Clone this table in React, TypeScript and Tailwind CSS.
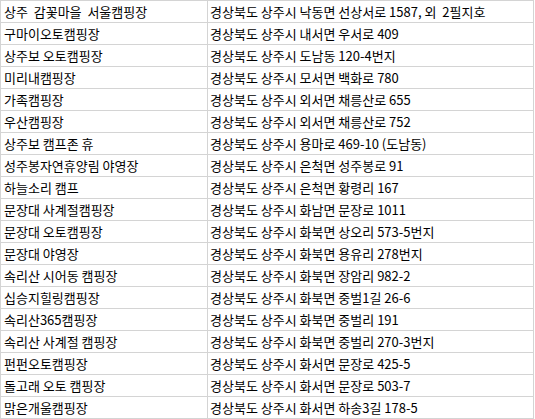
const rows: [string, string][] = [
  ["상주  감꽃마을  서울캠핑장", "경상북도 상주시 낙동면 선상서로 1587, 외  2필지호"],
  ["구마이오토캠핑장", "경상북도 상주시 내서면 우서로 409"],
  ["상주보 오토캠핑장", "경상북도 상주시 도남동 120-4번지"],
  ["미리내캠핑장", "경상북도 상주시 모서면 백화로 780"],
  ["가족캠핑장", "경상북도 상주시 외서면 채릉산로 655"],
  ["우산캠핑장", "경상북도 상주시 외서면 채릉산로 752"],
  ["상주보 캠프존 휴", "경상북도 상주시 용마로 469-10 (도남동)"],
  ["성주봉자연휴양림 야영장", "경상북도 상주시 은척면 성주봉로 91"],
  ["하늘소리 캠프", "경상북도 상주시 은척면 황령리 167"],
  ["문장대 사계절캠핑장", "경상북도 상주시 화남면 문장로 1011"],
  ["문장대 오토캠핑장", "경상북도 상주시 화북면 상오리 573-5번지"],
  ["문장대 야영장", "경상북도 상주시 화북면 용유리 278번지"],
  ["속리산 시어동 캠핑장", "경상북도 상주시 화북면 장암리 982-2"],
  ["십승지힐링캠핑장", "경상북도 상주시 화북면 중벌1길 26-6"],
  ["속리산365캠핑장", "경상북도 상주시 화북면 중벌리 191"],
  ["속리산 사계절 캠핑장", "경상북도 상주시 화북면 중벌리 270-3번지"],
  ["펀펀오토캠핑장", "경상북도 상주시 화서면 문장로 425-5"],
  ["돌고래 오토 캠핑장", "경상북도 상주시 화서면 문장로 503-7"],
  ["맑은개울캠핑장", "경상북도 상주시 화서면 하송3길 178-5"],
];

export default function App() {
  return (
    <div className="min-h-[419px] w-[535px] bg-white">
      <div
        className="grid w-[534px] grid-cols-[207px_326px] border-l border-t border-[#d4d4d4] text-[13px] text-black"
        style={{ fontFamily: '"Noto Sans CJK KR", "Noto Sans", sans-serif' }}
      >
        {rows.map(([name, addr]) => (
          <div key={name} className="contents">
            <div className="flex h-[22px] items-center whitespace-pre border-b border-r border-[#d4d4d4] pl-[3px] leading-none">
              {name}
            </div>
            <div className="flex h-[22px] items-center whitespace-pre border-b border-r border-[#d4d4d4] pl-[2px] leading-none">
              {addr}
            </div>
          </div>
        ))}
      </div>
    </div>
  );
}
